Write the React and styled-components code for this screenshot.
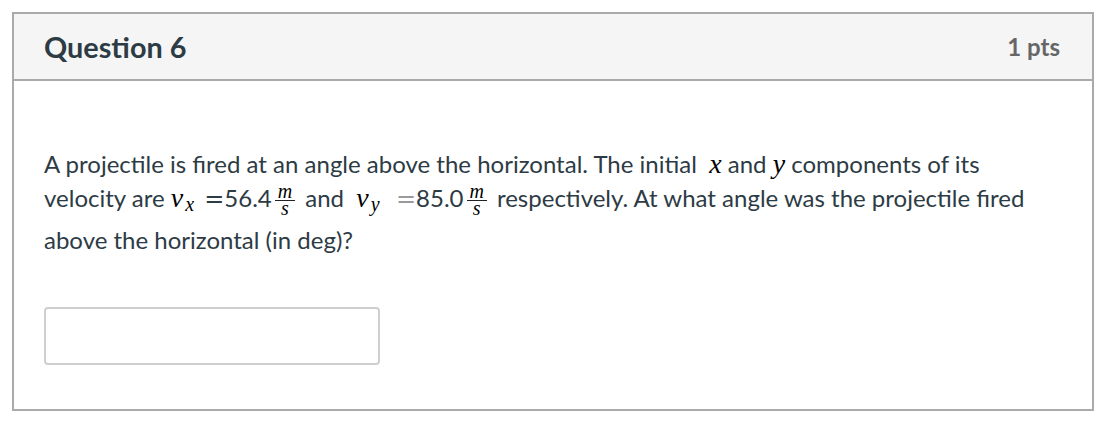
import React from "react";
import styled, { createGlobalStyle } from "styled-components";

const Global = createGlobalStyle`
  html, body { margin: 0; padding: 0; background: #fff; }
  body { font-family: Lato, "Open Sans", sans-serif; }
`;

const Page = styled.div`
  padding: 12px 8px 0 12px;
`;

const Card = styled.div`
  width: 1078px;
  height: 395px;
  border: 2px solid #aaaaaa;
  display: flex;
  flex-direction: column;
`;

const Header = styled.div`
  height: 65px;
  background: #f5f5f5;
  border-bottom: 2px solid #aaaaaa;
  display: flex;
  align-items: center;
  justify-content: space-between;
  padding: 0 32px 0 30px;
`;

const Title = styled.h2`
  margin: 0;
  font-size: 28.8px;
  font-weight: 700;
  color: #2d3b45;
`;

const Points = styled.span`
  font-size: 24px;
  font-weight: 700;
  color: #666666;
`;

const Body = styled.div`
  padding: 66px 30px 0 30px;
  display: flex;
  flex-direction: column;
`;

const Text = styled.p`
  margin: 0;
  width: 1016px;
  font-size: 24px;
  line-height: 34px;
  color: #2d3b45;
`;

const M = styled.span`
  font-family: "Liberation Serif", "DejaVu Serif", serif;
  font-style: italic;
  font-size: 28px;
  line-height: 0;
  color: #000;
`;

const Sub = styled.sub`
  font-size: 20px;
  line-height: 0;
  vertical-align: -4px;
  margin-left: 2px;
  margin-right: 4px;
`;

const Eq = styled.span`
  font-family: "DejaVu Serif", serif;
  font-size: 24px;
  line-height: 0;
  color: ${(p) => (p.$light ? "#9a9a9a" : "#2d3b45")};
`;

const Frac = styled.span`
  display: inline-flex;
  flex-direction: column;
  align-items: center;
  vertical-align: 9px;
  font-family: "Liberation Serif", serif;
  font-style: italic;
  font-size: 20px;
  line-height: 14px;
  margin: 0 10px 0 3px;
  color: #000;
`;

const Num = styled.span`
  border-bottom: 1px solid #222;
  padding: 0 3px 2px;
`;

const Den = styled.span`
  padding-bottom: 8px;
`;

const Answer = styled.input`
  margin-top: 50px;
  width: 332px;
  height: 54px;
  border: 2px solid #cfcfcf;
  border-radius: 4px;
  box-sizing: content-box;
  padding: 0;
  outline: none;
`;

export default function App() {
  return (
    <>
      <Global />
      <Page>
        <Card>
          <Header>
            <Title>Question 6</Title>
            <Points>1 pts</Points>
          </Header>
          <Body>
            <Text>
              A projectile is fired at an angle above the horizontal. The initial{" "}
              &nbsp;<M>x</M> and <M>y</M> components of its velocity are{" "}
              <M>
                v<Sub>x</Sub>
              </M>{" "}
              <Eq>=</Eq>56.4
              <Frac>
                <Num>m</Num>
                <Den>s</Den>
              </Frac>
              and{" "}
              &nbsp;<M>
                v<Sub>y</Sub>
              </M>{" "}
              &nbsp;<Eq $light>=</Eq>85.0
              <Frac>
                <Num>m</Num>
                <Den>s</Den>
              </Frac>
              respectively. At what angle was the projectile fired above the horizontal (in deg)?
            </Text>
            <Answer type="text" aria-label="answer" />
          </Body>
        </Card>
      </Page>
    </>
  );
}
